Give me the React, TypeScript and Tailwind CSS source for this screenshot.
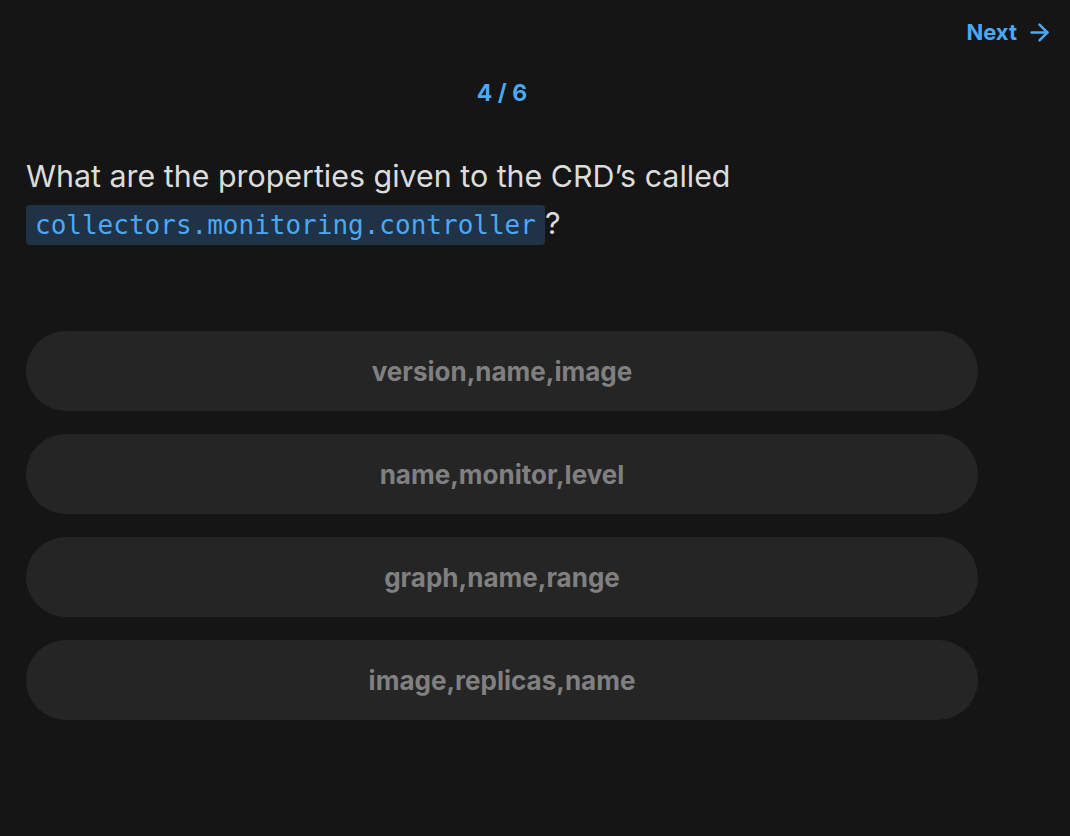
import { ArrowRight } from "lucide-react";

const answers = ["version,name,image", "name,monitor,level", "graph,name,range", "image,replicas,name"];

export default function App() {
  return (
    <div className="min-h-screen w-full bg-[#151515] font-['Inter',sans-serif]">
      <div className="flex justify-end pt-[18px] pr-[17px]">
        <button className="flex items-center gap-[9px] text-[22px] font-bold text-[#4aa8f5] leading-[28px]">
          Next
          <ArrowRight className="w-[27px] h-[27px]" strokeWidth={2.2} />
        </button>
      </div>
      <div className="w-[952px] ml-[26px]">
        <div className="text-center text-[23px] font-bold text-[#4aa8f5] mt-[33px] leading-[28px]">4 / 6</div>
        <p className="mt-[46px] text-[30.4px] leading-[47px] text-[#dcdcdc]">
          What are the properties given to the CRD’s called
          <br />
          <code className="font-['DejaVu_Sans_Mono',monospace] text-[26px] text-[#4aa8f5] bg-[#1f3246] rounded-[4px] px-[9px] py-[5px]">
            collectors.monitoring.controller
          </code>
          ?
        </p>
        <div className="mt-[82px] flex flex-col gap-[23px]">
          {answers.map(a => (
            <button
              key={a}
              className="h-[80px] w-full rounded-full bg-[#252525] text-[26px] font-bold text-[#808080]"
            >
              {a}
            </button>
          ))}
        </div>
      </div>
    </div>
  );
}
